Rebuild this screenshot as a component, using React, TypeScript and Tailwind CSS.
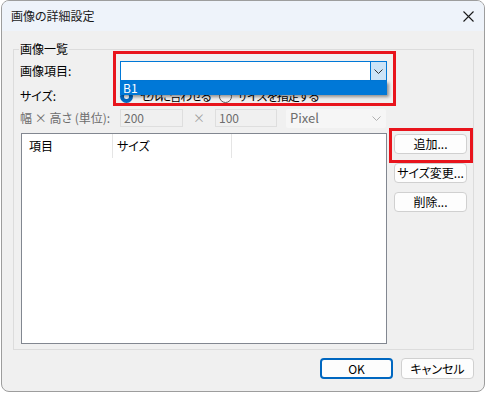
const font = "font-['Yu_Gothic_UI','Noto_Sans_CJK_JP',sans-serif] [font-feature-settings:'palt']";

function Btn({ label, primary = false, className = "" }: { label: string; primary?: boolean; className?: string }) {
  return (
    <div
      className={`flex items-center justify-center whitespace-nowrap rounded-[4px] bg-[#fdfdfd] text-[12px] text-black ${
        primary ? "border-2 border-[#0067c0]" : "border border-[#d0d0d0]"
      } ${className}`}
    >
      {label}
    </div>
  );
}

function Radio({ checked }: { checked?: boolean }) {
  return checked ? (
    <span className="flex h-[13px] w-[13px] shrink-0 items-center justify-center rounded-full bg-[#0067c0]">
      <span className="h-[5px] w-[5px] rounded-full bg-white" />
    </span>
  ) : (
    <span className="h-[13px] w-[13px] shrink-0 rounded-full border border-[#5a5a5a] bg-[#f5f5f5]" />
  );
}

function Chevron({ color }: { color: string }) {
  return (
    <svg width="9" height="5" viewBox="0 0 9 5" fill="none">
      <path d="M0.5 0.5 L4.5 4.5 L8.5 0.5" stroke={color} strokeWidth="1" />
    </svg>
  );
}

export default function App() {
  return (
    <div className={`relative h-[393px] w-[487px] overflow-hidden bg-white ${font}`}>
      <div className="ml-[1px] flex h-[392px] w-[484px] flex-col overflow-hidden rounded-[8px] border border-[#9d9d9d] bg-[#f0f0f0]">
        {/* title bar */}
        <div className="flex h-[30px] items-center justify-between bg-[#eef3fa] pl-[9px] pr-[10px]">
          <span className="text-[12px] text-[#1a1a1a]">画像の詳細設定</span>
          <svg width="11" height="11" viewBox="0 0 11 11">
            <path d="M0.5 0.5 L10.5 10.5 M10.5 0.5 L0.5 10.5" stroke="#1a1a1a" strokeWidth="1.1" />
          </svg>
        </div>

        <div className="flex flex-col pl-[11px]">
          {/* group box */}
          <div className="relative mt-[18px] flex h-[301px] w-[461px] flex-col border border-[#dcdcdc] pl-[6px]">
            <span className="absolute left-[5px] top-[-9px] bg-[#f0f0f0] px-[1px] text-[12px] leading-[16px] text-black">
              画像一覧
            </span>

            {/* 画像項目 */}
            <div className="mt-[11px] flex h-[20px] items-center whitespace-nowrap text-[12px] text-black">
              <span className="w-[100px] shrink-0">画像項目:</span>
              <div className="relative flex h-[20px] w-[267px] shrink-0 justify-end border border-[#0078d7] bg-white">
                <div className="flex h-full w-[16px] items-center justify-center border-l border-[#0078d7] bg-[#cce4f7]">
                  <Chevron color="#333333" />
                </div>
                <div className="absolute left-[-1px] top-[19px] z-10 flex h-[14px] w-[267px] items-center bg-[#0078d7] pl-[3px] text-[12px] text-white shadow-[2px_2px_3px_rgba(0,0,0,0.4)]">
                  B1
                </div>
              </div>
            </div>

            {/* サイズ */}
            <div className="mt-[8px] flex h-[14px] items-center whitespace-nowrap text-[12px] text-black">
              <span className="w-[100px] shrink-0">サイズ:</span>
              <Radio checked />
              <span className="ml-[7px] w-[79px] shrink-0 tracking-[-1.5px]">セルに合わせる</span>
              <Radio />
              <span className="ml-[5px] tracking-[-1px]">サイズを指定する</span>
            </div>

            {/* 幅 × 高さ */}
            <div className="mt-[6px] flex h-[18px] items-center whitespace-nowrap text-[12px] text-[#6d6d6d]">
              <span className="w-[100px] shrink-0">幅 × 高さ (単位):</span>
              <div className="flex h-[18px] w-[63px] shrink-0 items-center border border-[#dedede] bg-[#f0f0f0] pl-[3px]">200</div>
              <span className="w-[32px] shrink-0 text-center text-[#a0a0a0]">×</span>
              <div className="flex h-[18px] w-[62px] shrink-0 items-center border border-[#dedede] bg-[#f0f0f0] pl-[3px]">100</div>
              <div className="ml-[9px] flex h-[19px] w-[100px] shrink-0 items-center justify-between rounded-[2px] bg-[#f6f6f6] pl-[4px] pr-[5px]">
                <span className="text-[13px]">Pixel</span>
                <Chevron color="#b0b0b0" />
              </div>
            </div>

            {/* list + buttons */}
            <div className="mt-[6px] flex">
              <div className="ml-[1px] h-[211px] w-[366px] shrink-0 border border-[#828790] bg-white">
                <div className="flex h-[24px] text-[12px] text-black">
                  <div className="flex w-[91px] items-center border-r border-[#e5e5e5] pl-[7px]">項目</div>
                  <div className="flex w-[119px] items-center border-r border-[#e5e5e5] pl-[4px]">サイズ</div>
                </div>
              </div>
              <div className="ml-[7px] mt-[1px] flex flex-col gap-[9px]">
                <Btn label="追加..." className="h-[20px] w-[73px]" />
                <Btn label="サイズ変更..." className="h-[20px] w-[73px]" />
                <Btn label="削除..." className="h-[20px] w-[73px]" />
              </div>
            </div>
          </div>
        </div>

        {/* footer */}
        <div className="mt-[8px] flex justify-end gap-[8px] pr-[10px]">
          <Btn label="OK" primary className="h-[21px] w-[73px]" />
          <Btn label="キャンセル" className="h-[21px] w-[73px]" />
        </div>
      </div>

      {/* red highlight boxes */}
      <div className="absolute left-[113px] top-[51px] h-[55px] w-[283px] border-[3px] border-[#e8141c]" />
      <div className="absolute left-[389px] top-[128px] h-[35px] w-[84px] border-[3px] border-[#e8141c]" />
    </div>
  );
}
